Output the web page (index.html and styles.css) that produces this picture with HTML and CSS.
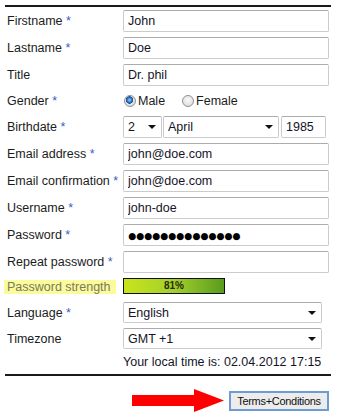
FILE: index.html
```html
<!DOCTYPE html>
<html lang="en">
<head>
  <meta charset="UTF-8">
  <meta name="viewport" content="width=device-width, initial-scale=1.0">
  <title>Registration</title>
  <link rel="stylesheet" href="styles.css">
</head>
<body>
  <form class="form" id="registerForm">
    <div class="row">
      <label class="lbl" for="firstname">Firstname <span class="req">*</span></label>
      <input class="field" type="text" id="firstname" value="John">
    </div>
    <div class="row">
      <label class="lbl" for="lastname">Lastname <span class="req">*</span></label>
      <input class="field" type="text" id="lastname" value="Doe">
    </div>
    <div class="row">
      <label class="lbl" for="title">Title</label>
      <input class="field" type="text" id="title" value="Dr. phil">
    </div>
    <div class="row row-short">
      <span class="lbl">Gender <span class="req">*</span></span>
      <div class="radios">
        <label class="radio"><input type="radio" name="gender" checked> Male</label>
        <label class="radio"><input type="radio" name="gender"> Female</label>
      </div>
    </div>
    <div class="row">
      <span class="lbl">Birthdate <span class="req">*</span></span>
      <div class="birth">
        <span class="select day"><select><option>2</option></select></span>
        <span class="select month"><select><option>April</option></select></span>
        <input class="field year" type="text" value="1985">
      </div>
    </div>
    <div class="row">
      <label class="lbl" for="email">Email address <span class="req">*</span></label>
      <input class="field" type="text" id="email" value="john@doe.com">
    </div>
    <div class="row">
      <label class="lbl" for="email2">Email confirmation <span class="req">*</span></label>
      <input class="field" type="text" id="email2" value="john@doe.com">
    </div>
    <div class="row">
      <label class="lbl" for="username">Username <span class="req">*</span></label>
      <input class="field" type="text" id="username" value="john-doe">
    </div>
    <div class="row">
      <label class="lbl" for="password">Password <span class="req">*</span></label>
      <input class="field pass" type="text" id="password" value="●●●●●●●●●●●●●●">
    </div>
    <div class="row">
      <label class="lbl" for="password2">Repeat password <span class="req">*</span></label>
      <input class="field" type="text" id="password2" value="">
    </div>
    <div class="row row-bar">
      <span class="lbl"><span class="hilite">Password strength</span></span>
      <div class="strength"><span>81%</span></div>
    </div>
    <div class="row row-select">
      <span class="lbl">Language <span class="req">*</span></span>
      <span class="select wide"><select><option>English</option></select></span>
    </div>
    <div class="row row-select">
      <span class="lbl">Timezone</span>
      <span class="select wide"><select><option>GMT +1</option></select></span>
    </div>
    <div class="row row-note">
      <span></span>
      <span class="note">Your local time is: 02.04.2012 17:15</span>
    </div>
  </form>

  <div class="actions">
    <svg class="arrow" width="93" height="23" viewBox="0 0 93 23">
      <polygon points="0,6 62,6 62,0 92,11.5 62,23 62,17 0,17" fill="#f00"/>
    </svg>
    <button type="button" class="terms">Terms+Conditions</button>
  </div>
</body>
</html>
```

FILE: styles.css
```css
body {
  margin: 0;
  font-family: "Liberation Sans", Arial, sans-serif;
  font-size: 12.5px;
  color: #1c1c1c;
  background: #fff;
}

.form {
  display: flex;
  flex-direction: column;
  gap: 5px;
  margin: 5px 8px 0 5px;
  padding: 3px 2px 5px;
  border-top: 2px solid #1a1a1a;
  border-bottom: 2px solid #1a1a1a;
}

.row {
  display: grid;
  grid-template-columns: 116px 1fr;
  align-items: center;
  height: 22px;
}

.row-short {
  height: 20px;
}

.row-bar {
  height: 19px;
  align-items: start;
}

.row-select {
  height: 21px;
}

.row-note {
  height: 15px;
}

.lbl {
  white-space: nowrap;
}

.req {
  color: #3a5cc2;
}

.hilite {
  display: inline-block;
  margin: 2px 0 0 -3px;
  padding: 0 5px 0 3px;
  line-height: 14px;
  background: #fbfb9c;
  color: #7a7a5c;
}

.field {
  box-sizing: border-box;
  width: 206px;
  height: 22px;
  margin: 0;
  padding: 0 4px;
  border: 1px solid #cbcbcb;
  border-top-color: #acacac;
  border-radius: 2px;
  font: inherit;
  color: #141428;
  background: #fff;
}

.pass {
  font-family: "DejaVu Sans", sans-serif;
  font-size: 9.2px;
  color: #000;
}

.radios {
  display: flex;
  gap: 17px;
  align-items: center;
  padding-left: 1px;
}

.radio {
  display: flex;
  align-items: center;
  gap: 2px;
}

.radio input {
  appearance: none;
  -webkit-appearance: none;
  margin: 0;
  width: 12px;
  height: 12px;
  border: 1px solid #8f9194;
  border-radius: 50%;
  background: radial-gradient(circle at 50% 40%, #fafafa 0, #d6d6d6 100%);
  box-sizing: border-box;
}

.radio input:checked {
  background: radial-gradient(circle at 45% 40%, #9fd3ff 0, #2a6fc0 2.5px, #1c4f94 3.5px, #e8e8e8 4px, #cfcfcf 100%);
}

.birth {
  display: flex;
  align-items: center;
}

.select {
  position: relative;
  display: inline-block;
}

.select select {
  appearance: none;
  -webkit-appearance: none;
  box-sizing: border-box;
  width: 100%;
  height: 22px;
  margin: 0;
  padding: 0 4px;
  border: 1px solid #cbcbcb;
  border-top-color: #acacac;
  border-radius: 2px;
  font: inherit;
  color: #141428;
  background: #fff;
}

.select::after {
  content: "";
  position: absolute;
  right: 6px;
  top: 50%;
  margin-top: -2px;
  border-left: 4px solid transparent;
  border-right: 4px solid transparent;
  border-top: 4px solid #111;
}

.day {
  width: 39px;
  margin-right: 1px;
}

.month {
  width: 116px;
  margin-right: 2px;
}

.year {
  width: 45px;
}

.wide {
  width: 199px;
}

.wide select {
  height: 21px;
}

.strength {
  box-sizing: border-box;
  width: 102px;
  height: 16px;
  border: 1px solid #111;
  background: linear-gradient(to right, #c9e41c, #a3cf2c 50%, #5a9c1e);
  text-align: center;
  font-size: 10px;
  font-weight: bold;
  line-height: 14px;
  color: #2a2a10;
}

.note {
  color: #141428;
}

.actions {
  display: flex;
  justify-content: flex-end;
  align-items: center;
  gap: 4px;
  margin: 13px 10px 0 0;
}

.terms {
  box-sizing: border-box;
  width: 100px;
  height: 20px;
  padding: 0;
  border: 2px solid #6e9bd1;
  background: #ececec;
  font: inherit;
  font-size: 11px;
  letter-spacing: -0.3px;
  color: #111;
  cursor: pointer;
}
```
